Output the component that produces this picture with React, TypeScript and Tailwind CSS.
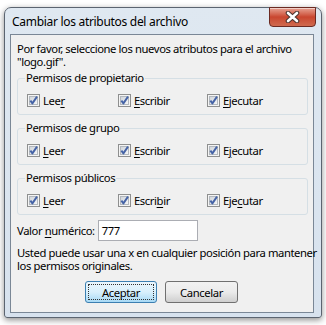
const font = { fontFamily: '"Noto Sans", "Open Sans", sans-serif' };

const CheckIcon = () => (
  <svg width="13" height="13" viewBox="0 0 13 13" className="shrink-0">
    <defs>
      <linearGradient id="cbg" x1="0" y1="0" x2="1" y2="1">
        <stop offset="0" stopColor="#cfd3d8" />
        <stop offset="1" stopColor="#f7f8f9" />
      </linearGradient>
    </defs>
    <rect x="0.5" y="0.5" width="12" height="12" fill="#f4f4f4" stroke="#8e8f8f" />
    <rect x="2.5" y="2.5" width="8" height="8" fill="url(#cbg)" stroke="#b3b8be" />
    <path d="M3.4 6.6 L5.4 9.4 L10 2.6" stroke="#4563a6" strokeWidth="1.9" fill="none" strokeLinejoin="round" />
  </svg>
);

type Opt = { pre: string; key: string; post: string };

const Check = ({ o, w }: { o: Opt; w: string }) => (
  <div className={`flex items-center gap-[3px] ${w}`}>
    <CheckIcon />
    <span className="text-black">
      {o.pre}
      <u className="underline-offset-[2px]">{o.key}</u>
      {o.post}
    </span>
  </div>
);

const groups: { title: string; opts: Opt[] }[] = [
  {
    title: "Permisos de propietario",
    opts: [
      { pre: "Lee", key: "r", post: "" },
      { pre: "", key: "E", post: "scribir" },
      { pre: "", key: "E", post: "jecutar" },
    ],
  },
  {
    title: "Permisos de grupo",
    opts: [
      { pre: "", key: "L", post: "eer" },
      { pre: "", key: "E", post: "scribir" },
      { pre: "E", key: "j", post: "ecutar" },
    ],
  },
  {
    title: "Permisos públicos",
    opts: [
      { pre: "", key: "L", post: "eer" },
      { pre: "Escri", key: "b", post: "ir" },
      { pre: "Eje", key: "c", post: "utar" },
    ],
  },
];

const Group = ({ title, opts }: { title: string; opts: Opt[] }) => (
  <fieldset className="ml-[6px] mr-[5px] rounded-[3px] border border-[#d5dfe5] pl-[9px] pb-[7px] pt-[9px]">
    <legend className="px-[1px] ml-[-2px] leading-[14px] text-black">{title}</legend>
    <div className="flex">
      <Check o={opts[0]} w="w-[91px]" />
      <Check o={opts[1]} w="w-[89px]" />
      <Check o={opts[2]} w="w-[90px]" />
    </div>
  </fieldset>
);

export default function App() {
  return (
    <div className="w-[326px] h-[325px] bg-white pl-[4px] pt-[7px]" style={font}>
      <div className="w-[318px] h-[311px] rounded-t-[7px] rounded-b-[3px] border border-[#5b6470] bg-gradient-to-b from-[#dfe8f1] to-[#d7e2ee] shadow-[0_2px_6px_rgba(0,0,0,0.45)] flex flex-col">
        <div className="h-[26px] flex items-start justify-between pl-[7px] pr-[5px]">
          <span className="mt-[7px] text-[12px] leading-[14px] tracking-[-0.3px] text-black">Cambiar los atributos del archivo</span>
          <div className="mt-[-1px] w-[47px] h-[20px] rounded-b-[4px] border border-[#6b2a22] bg-gradient-to-b from-[#e6a293] via-[#c9462f] to-[#cf6a4f] flex items-center justify-center shadow-[inset_0_1px_0_rgba(255,255,255,0.5)]">
            <svg width="15" height="12" viewBox="0 0 15 12">
              <path d="M3 2 L12 10 M12 2 L3 10" stroke="#4a3430" strokeWidth="4.6" strokeLinecap="round" />
              <path d="M3 2 L12 10 M12 2 L3 10" stroke="#ffffff" strokeWidth="2.6" strokeLinecap="round" />
            </svg>
          </div>
        </div>
        <div className="ml-[5px] w-[304px] h-[279px] border border-[#7a8796] bg-[#f0f0f0] flex flex-col text-[11.25px] leading-[13px] tracking-[-0.4px] text-black">
          <p className="mt-[7px] ml-[6px] whitespace-nowrap">
            Por favor, seleccione los nuevos atributos para el archivo
            <br />
            "logo.gif".
          </p>
          <div className="mt-[3px] flex flex-col gap-[6px]">
            {groups.map((g) => (
              <Group key={g.title} title={g.title} opts={g.opts} />
            ))}
          </div>
          <div className="mt-[5px] ml-[6px] flex items-center gap-[3px] whitespace-nowrap">
            <span>
              Valor <u className="underline-offset-[2px]">n</u>umérico:
            </span>
            <div className="w-[100px] h-[21px] border border-[#abadb3] bg-white pl-[3px] flex items-center">
              777
            </div>
          </div>
          <p className="mt-[5px] ml-[6px] whitespace-nowrap">
            Usted puede usar una x en cualquier posición para mantener
            <br />
            los permisos originales.
          </p>
          <div className="mt-[9px] flex justify-center gap-[8px] pr-[1px]">
            <button className="w-[72px] h-[22px] rounded-[3px] border border-[#3c7fb1] bg-gradient-to-b from-[#eaf6fd] via-[#d9f0fc] to-[#a7d9f5] p-[2px]">
              <div className="h-full border border-dotted border-[#333] flex items-center justify-center">Aceptar</div>
            </button>
            <button className="w-[73px] h-[22px] rounded-[3px] border border-[#707070] bg-gradient-to-b from-[#f2f2f2] via-[#ebebeb] to-[#cfcfcf] flex items-center justify-center">
              Cancelar
            </button>
          </div>
        </div>
      </div>
    </div>
  );
}
